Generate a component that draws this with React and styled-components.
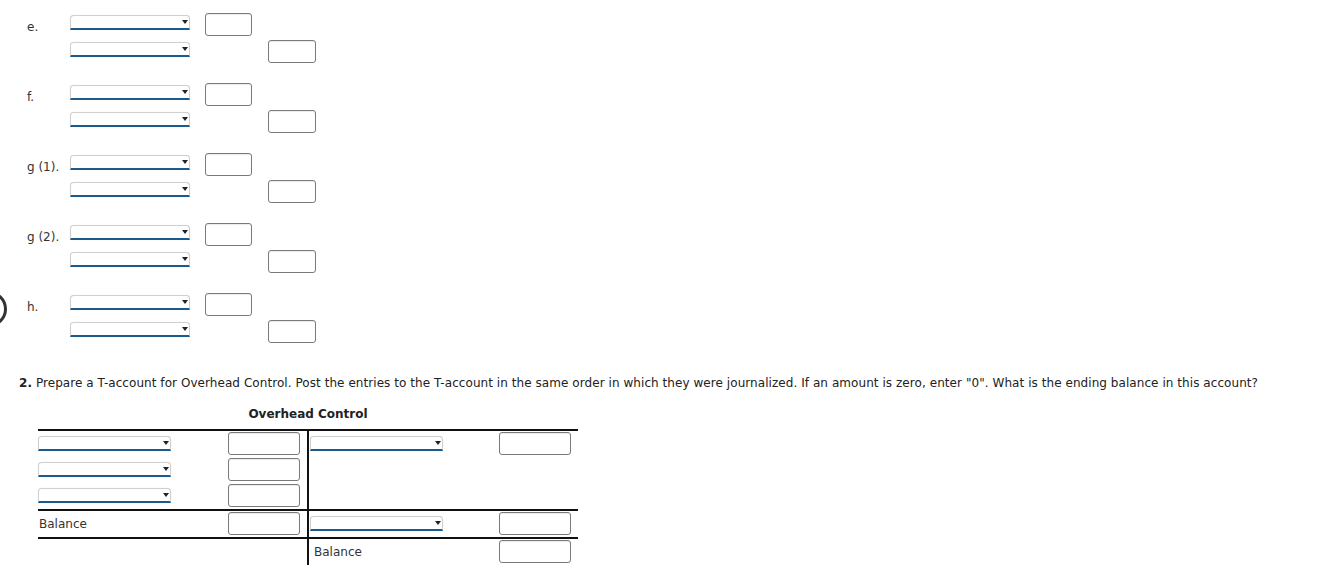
import styled, { createGlobalStyle } from "styled-components";

const GlobalStyle = createGlobalStyle`
  body {
    margin: 8px;
    background: #fff;
    color: #222;
    font-family: "DejaVu Sans", Verdana, sans-serif;
  }
`;

const Page = styled.div`
  padding: 5px 0 0 11px;
`;

const Entries = styled.div`
  margin-left: 8px;
`;

const Entry = styled.div`
  display: grid;
  grid-template-columns: 43px 135px 63px 48px;
  grid-auto-rows: 27px;
  margin-bottom: 16px;
`;

const Label = styled.span`
  align-self: center;
  font-size: 12px;
  color: #333;
  white-space: nowrap;
`;

const DropWrap = styled.div`
  position: relative;
  width: ${(p) => p.$width || 120}px;
  height: 15px;
  margin-top: ${(p) => (p.$offset != null ? p.$offset : 2)}px;

  &::after {
    content: "";
    position: absolute;
    right: 2px;
    top: 5px;
    border-left: 3.5px solid transparent;
    border-right: 3.5px solid transparent;
    border-top: 4px solid #222;
    pointer-events: none;
  }
`;

const Select = styled.select`
  appearance: none;
  display: block;
  box-sizing: border-box;
  width: 100%;
  height: 100%;
  margin: 0;
  padding: 0 12px 0 4px;
  background: #fff;
  border: 1px solid #d0d0d0;
  border-bottom: 2px solid #1d5a8c;
  border-radius: 4px 4px 0 0;
  box-shadow: 0 0 1px rgba(0, 0, 0, 0.15);
  font-family: inherit;
  font-size: 11px;
  outline: none;
`;

const Amount = styled.input`
  box-sizing: border-box;
  display: block;
  width: ${(p) => p.$width || 47}px;
  height: 23px;
  margin: 0;
  padding: 0 4px;
  border: 1px solid #7a7a7a;
  border-radius: 3px;
  background: #fff;
  box-shadow: inset 0 1px 1px rgba(0, 0, 0, 0.08);
  font-family: inherit;
  font-size: 12px;
  outline: none;
`;

const Marker = styled.div`
  position: absolute;
  left: -29px;
  top: 291px;
  width: 30px;
  height: 30px;
  border: 3px solid #333;
  border-radius: 50%;
`;

const Question = styled.p`
  margin: 29px 0 0;
  font-size: 12px;
  line-height: 15px;
  letter-spacing: 0.06px;
  color: #222;
  white-space: nowrap;

  b {
    font-weight: bold;
  }
`;

const AccountTitle = styled.div`
  width: 540px;
  margin: 16px 0 0 19px;
  text-align: center;
  font-size: 12px;
  font-weight: bold;
  color: #222;
`;

const TAccount = styled.div`
  display: grid;
  grid-template-columns: 190px 79px 192px 79px;
  grid-template-rows: repeat(5, auto);
  width: 540px;
  margin: 8px 0 0 19px;
`;

const Cell = styled.div`
  box-sizing: border-box;
  display: flex;
  align-items: flex-start;
  height: ${(p) => (p.$ruled ? 28 : 26)}px;
  padding-top: 1px;
  padding-left: ${(p) => (p.$divider ? 1 : 0)}px;
  border-top: ${(p) => (p.$ruled ? "2px solid #111" : "none")};
  border-left: ${(p) => (p.$divider ? "2px solid #111" : "none")};
`;

const CellText = styled.span`
  margin: 5px 0 0 ${(p) => (p.$inset ? 4 : 1)}px;
  font-size: 12px;
  color: #333;
`;

function Dropdown({ width, offset }) {
  return (
    <DropWrap $width={width} $offset={offset}>
      <Select defaultValue="">
        <option value=""></option>
      </Select>
    </DropWrap>
  );
}

const entries = ["e.", "f.", "g (1).", "g (2).", "h."];

function JournalEntry({ label }) {
  return (
    <Entry>
      <Label>{label}</Label>
      <Dropdown />
      <Amount type="text" />
      <span />
      <span />
      <Dropdown />
      <span />
      <Amount type="text" $width={48} />
    </Entry>
  );
}

const tRows = [
  { ruled: true, left: "select", right: "select", rightAmount: true },
  { left: "select" },
  { left: "select" },
  { ruled: true, left: "Balance", right: "select", rightAmount: true },
  { ruled: true, leftAmount: false, right: "Balance", rightAmount: true },
];

function SideLabel({ kind, inset }) {
  if (kind === "select") return <Dropdown width={133} offset={4} />;
  if (kind) return <CellText $inset={inset}>{kind}</CellText>;
  return null;
}

export default function App() {
  return (
    <>
      <GlobalStyle />
      <Marker />
      <Page>
        <Entries>
          {entries.map((label) => (
            <JournalEntry key={label} label={label} />
          ))}
        </Entries>

        <Question>
          <b>2.</b> Prepare a T-account for Overhead Control. Post the entries to the T-account in the same order in which they were
          journalized. If an amount is zero, enter "0". What is the ending balance in this account?
        </Question>

        <AccountTitle>Overhead Control</AccountTitle>
        <TAccount>
          {tRows.map((row, i) => (
            <>
              <Cell key={`a${i}`} $ruled={row.ruled}>
                <SideLabel kind={row.left} />
              </Cell>
              <Cell key={`b${i}`} $ruled={row.ruled}>
                {row.leftAmount !== false && <Amount type="text" $width={72} />}
              </Cell>
              <Cell key={`c${i}`} $ruled={row.ruled} $divider>
                <SideLabel kind={row.right} inset />
              </Cell>
              <Cell key={`d${i}`} $ruled={row.ruled}>
                {row.rightAmount && <Amount type="text" $width={72} />}
              </Cell>
            </>
          ))}
        </TAccount>
      </Page>
    </>
  );
}
